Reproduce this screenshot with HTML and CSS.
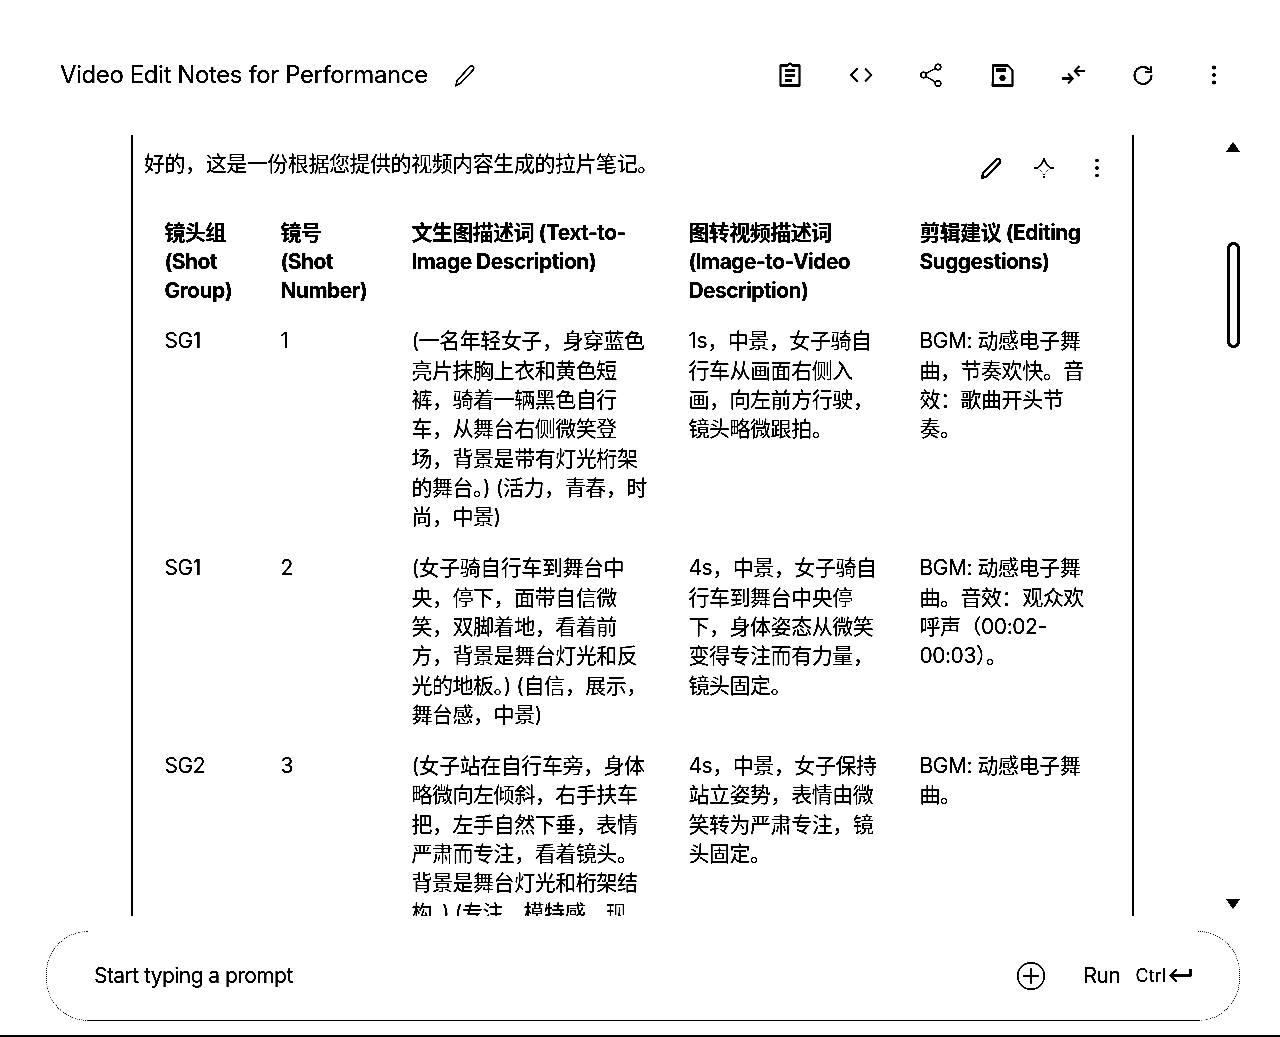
FILE: index.html
```html
<!DOCTYPE html>
<html lang="en">

<head>
  <meta charset="UTF-8">
  <meta name="viewport" content="width=device-width, initial-scale=1.0">
  <title>Video Edit Notes for Performance</title>
  <link rel="stylesheet" href="styles.css">
</head>

<body>
  <header class="top-bar">
    <div class="title-wrap">
      <h1>Video Edit Notes for Performance</h1>
      <svg class="icon" viewBox="0 0 28 28"><path class="thin" d="M7 24.500 8 19.500 21 5.500Q22.500 4 24 5.500 25.500 7 24 9L11.500 22.500Z"/></svg>
    </div>
    <div class="top-actions">
      <!-- clipboard -->
      <svg class="icon" viewBox="0 0 28 28"><path d="M4.500 4.500H11.500Q14 .5 16.500 4.500H23.500V24.500H4.500ZM9 9.500H19M9 14.500H19M9 19.500H16"/></svg>
      <!-- code -->
      <svg class="icon" viewBox="0 0 28 28"><path d="M10.500 7.500 4 14 10.500 20.500M18 7.500 24.500 14 18 20.500"/></svg>
      <!-- share -->
      <svg class="icon" viewBox="0 0 28 28"><circle class="thin" cx="21" cy="6" r="2.800"/><circle class="thin" cx="6.500" cy="14" r="2.800"/><circle class="thin" cx="21" cy="22.500" r="2.800"/><path class="thin" d="M9 12.500 18.500 7.500M9 15.500 18.500 21"/></svg>
      <!-- save -->
      <svg class="icon" viewBox="0 0 28 28"><path d="M5 4.500H20L24.500 9V24.500H4.500Z"/><rect class="solid" x="8" y="7" width="10" height="4"/><circle class="solid" cx="14.500" cy="17" r="3"/></svg>
      <!-- compress -->
      <svg class="icon" viewBox="0 0 28 28"><path d="M3 17.500H14M9 12.500 14 17.500 9 22.500M26 10H16M20.500 5 15.500 10 20.500 15"/></svg>
      <!-- refresh -->
      <svg class="icon" viewBox="0 0 28 28"><path d="M20.500 9A8.500 8.500 0 1 0 22.500 14M22 5.500V11H16.500"/></svg>
      <!-- more -->
      <svg class="icon" viewBox="0 0 28 28"><circle class="solid" cx="14" cy="6.500" r="1.900"/><circle class="solid" cx="14" cy="14" r="1.900"/><circle class="solid" cx="14" cy="21.500" r="1.900"/></svg>
    </div>
  </header>

  <main class="chat-area">
    <section class="chat-panel">
      <div class="message-head">
        <p>好的，这是一份根据您提供的视频内容生成的拉片笔记。</p>
        <div class="message-actions">
          <svg class="icon" viewBox="0 0 28 28"><path class="bold" d="M5 24 6 19 19.500 5.500Q21 4.500 22.500 5.500 24 7 23 8.500L9.500 22.500Z"/></svg>
          <svg class="icon" viewBox="0 0 28 28"><path class="thin" d="M14 4.500Q12.500 11 7 14M14 4.500Q15.500 11 21 14M4 14H8M20 14H24"/><path class="hair" d="M7 14Q11 16 14 21 17 16 21 14"/><circle class="solid" cx="14" cy="23" r="1"/></svg>
          <svg class="icon" viewBox="0 0 28 28"><circle class="solid" cx="14" cy="6.500" r="1.800"/><circle class="solid" cx="14" cy="14" r="1.800"/><circle class="solid" cx="14" cy="21.500" r="1.800"/></svg>
        </div>
      </div>
      <table class="notes">
        <thead>
          <tr>
            <th>镜头组 (Shot Group)</th>
            <th>镜号 (Shot Number)</th>
            <th>文生图描述词 (Text-to-Image Description)</th>
            <th>图转视频描述词 (Image-to-Video Description)</th>
            <th>剪辑建议 (Editing Suggestions)</th>
          </tr>
        </thead>
        <tbody>
          <tr>
            <td>SG1</td>
            <td>1</td>
            <td>(一名年轻女子，身穿蓝色亮片抹胸上衣和黄色短裤，骑着一辆黑色自行车，从舞台右侧微笑登场，背景是带有灯光桁架的舞台。) (活力，青春，时尚，中景)</td>
            <td>1s，中景，女子骑自行车从画面右侧入画，向左前方行驶，镜头略微跟拍。</td>
            <td>BGM: 动感电子舞曲，节奏欢快。音效：歌曲开头节奏。</td>
          </tr>
          <tr>
            <td>SG1</td>
            <td>2</td>
            <td>(女子骑自行车到舞台中央，停下，面带自信微笑，双脚着地，看着前方，背景是舞台灯光和反光的地板。) (自信，展示，舞台感，中景)</td>
            <td>4s，中景，女子骑自行车到舞台中央停下，身体姿态从微笑变得专注而有力量，镜头固定。</td>
            <td>BGM: 动感电子舞曲。音效：观众欢呼声（00:02-00:03）。</td>
          </tr>
          <tr>
            <td>SG2</td>
            <td>3</td>
            <td>(女子站在自行车旁，身体略微向左倾斜，右手扶车把，左手自然下垂，表情严肃而专注，看着镜头。背景是舞台灯光和桁架结构。) (专注，模特感，现代，中景)</td>
            <td>4s，中景，女子保持站立姿势，表情由微笑转为严肃专注，镜头固定。</td>
            <td>BGM: 动感电子舞曲。</td>
          </tr>
        </tbody>
      </table>
    </section>
    <aside class="scroll-rail">
      <span class="arrow-up"></span>
      <span class="thumb"></span>
      <span class="arrow-down"></span>
    </aside>
  </main>

  <div class="prompt-box">
    <span class="cap cap-left"></span>
    <div class="prompt-mid">
      <span class="prompt-text">Start typing a prompt</span>
      <svg class="icon" viewBox="0 0 28 28"><circle class="thin" cx="14" cy="14" r="13.300"/><path d="M14 6.500V21.500M6.500 14H21.500"/></svg>
      <span class="run-label">Run</span>
      <span class="ctrl-label">Ctrl</span>
      <svg class="enter" viewBox="0 0 24 16"><path d="M22.500 2V8.500H3M8.500 2.500 2.500 8.500 8.500 14.500"/></svg>
    </div>
    <span class="cap cap-right"></span>
  </div>
  <footer class="page-line"></footer>
</body>

</html>
```

FILE: styles.css
```css
* {
  box-sizing: border-box;
}

html,
body {
  margin: 0;
  height: 1037px;
  overflow: hidden;
  background-color: white;
}

/* the reference is pure black on white */
body {
  color: black;
  font-family: Inter, "Noto Sans CJK SC", sans-serif;
  font-size: 21px;
  letter-spacing: -0.45px;
  line-height: 29.33px;
  filter: grayscale(1) brightness(0.8) contrast(6);
}

svg {
  display: block;
  flex: none;
}

.icon path,
.icon circle,
.enter path {
  fill: none;
  stroke: black;
  stroke-width: 1.800;
}

.icon .thin {
  stroke-width: 1.400;
}

.icon .bold {
  stroke-width: 2;
}

.icon .hair {
  stroke-width: 0.500;
}

.icon .solid {
  fill: black;
  stroke: none;
}

.icon rect.solid {
  fill: black;
}

.icon {
  width: 28px;
  height: 28px;
}

.top-bar {
  height: 135px;
  padding: 61px 52px 0 60px;
  display: flex;
  align-items: flex-start;
  justify-content: space-between;
}

.title-wrap {
  display: flex;
  align-items: center;
  gap: 21px;
}

h1 {
  margin: 0;
  font-size: 24px;
  font-weight: 400;
  letter-spacing: -0.4px;
  line-height: 28px;
}

.top-actions {
  display: flex;
  gap: 42.67px;
}

.chat-area {
  height: 781px;
  display: flex;
  padding-left: 131px;
}

.chat-panel {
  width: 1003px;
  padding: 14px 20px 0 11px;
  border-left: 2px solid black;
  border-right: 2px solid black;
  overflow: hidden;
}

.message-head {
  display: flex;
  justify-content: space-between;
  margin-bottom: 28px;
}

.message-head p {
  margin: 0;
}

.message-actions {
  display: flex;
  gap: 25px;
  height: 29px;
  padding: 5px 0 0;
  margin-right: 1px;
}

.notes {
  width: 971px;
  margin-left: -0.6px;
  table-layout: fixed;
  border-collapse: collapse;
}

.notes th,
.notes td {
  padding: 10.8px 19px 10.8px 21px;
  text-align: left;
  vertical-align: top;
}

.notes th {
  padding-top: 11.3px;
  padding-bottom: 10px;
  font-weight: 700;
  letter-spacing: -0.55px;
}

.notes th:nth-child(1) {
  width: 116px;
}

.notes th:nth-child(2) {
  width: 131px;
}

.notes th:nth-child(3) {
  width: 277px;
}

.notes th:nth-child(4) {
  width: 231px;
}

.scroll-rail {
  width: 106px;
  padding-left: 92px;
  display: flex;
  flex-direction: column;
  align-items: center;
}

.arrow-up,
.arrow-down {
  width: 0;
  height: 0;
  border-left: 7px solid transparent;
  border-right: 7px solid transparent;
}

.arrow-up {
  margin-top: 7px;
  border-bottom: 10px solid black;
}

.arrow-down {
  margin-top: 551px;
  border-top: 10px solid black;
}

.thumb {
  width: 13px;
  height: 106px;
  margin-top: 90px;
  border: 3px solid black;
  border-radius: 7px;
}

.prompt-box {
  height: 90px;
  margin: 15px 40px 0 46px;
  display: flex;
}

.cap {
  width: 42px;
  flex: none;
  border: 1px dotted black;
}

.cap-left {
  border-right: none;
  border-radius: 45px 0 0 45px;
}

.cap-right {
  border-left: none;
  border-radius: 0 45px 45px 0;
}

.prompt-mid {
  flex: 1;
  display: flex;
  align-items: center;
  padding-left: 6px;
  border-bottom: 1px solid black;
}

.prompt-text {
  flex: 1;
  letter-spacing: -0.55px;
}

.run-label {
  margin-left: 39px;
}

.ctrl-label {
  margin-left: 15px;
  font-size: 18px;
  letter-spacing: 0;
}

.enter {
  width: 24px;
  height: 16px;
  margin: -2px 6px 0 2px;
}

.enter path {
  stroke-width: 2.200;
}

.page-line {
  margin-top: 14px;
  height: 2px;
  background-color: black;
}
```
